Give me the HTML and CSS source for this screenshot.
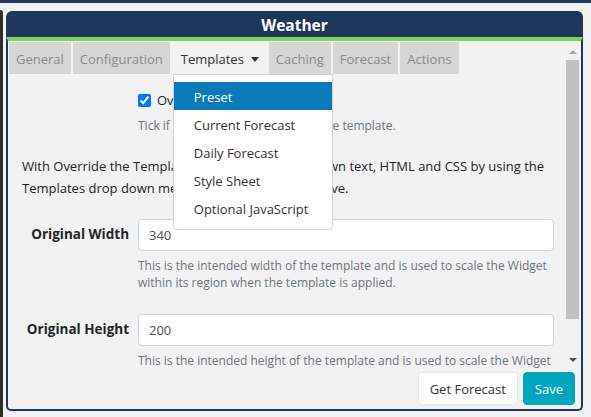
FILE: index.html
```html
<!DOCTYPE html>
<html>
<head>
<meta charset="utf-8">
<title>Weather</title>
<link rel="stylesheet" href="styles.css">
</head>
<body>
<div class="topbar"></div>
<div class="page">
  <div class="edge"></div>
  <div class="modal">
    <div class="modal-header">Weather</div>
    <div class="modal-body">
      <div class="scroll-area">
        <div class="scroll-content">
          <ul class="tabs">
            <li class="tab">General</li>
            <li class="tab">Configuration</li>
            <li class="tab active">Templates<span class="caret"></span>
              <div class="dropdown">
                <div class="dd-item selected">Preset</div>
                <div class="dd-item">Current Forecast</div>
                <div class="dd-item">Daily Forecast</div>
                <div class="dd-item">Style Sheet</div>
                <div class="dd-item">Optional JavaScript</div>
              </div>
            </li>
            <li class="tab">Caching</li>
            <li class="tab">Forecast</li>
            <li class="tab">Actions</li>
          </ul>
          <div class="pane">
            <div class="form-row check-row">
              <div></div>
              <label class="check"><input type="checkbox" checked> Override the template?</label>
            </div>
            <div class="form-row">
              <div></div>
              <div class="help tick-help">Tick if you would like to override the template.</div>
            </div>
            <p class="intro">With Override the Templates, you can enter your own text, HTML and CSS by using the<br>Templates drop down menu in the tab bar row above.</p>
            <div class="form-row group">
              <label class="label">Original Width</label>
              <div>
                <input class="input" type="text" value="340">
                <div class="help">This is the intended width of the template and is used to scale the Widget within its region when the template is applied.</div>
              </div>
            </div>
            <div class="form-row group">
              <label class="label">Original Height</label>
              <div>
                <input class="input" type="text" value="200">
                <div class="help">This is the intended height of the template and is used to scale the Widget within its region when the template is applied.</div>
              </div>
            </div>
          </div>
        </div>
        <div class="scrollbar">
          <div class="sb-btn"><span class="arrow-up"></span></div>
          <div class="sb-thumb"></div>
          <div class="sb-track"></div>
          <div class="sb-btn"><span class="arrow-down"></span></div>
        </div>
      </div>
      <div class="footer">
        <button class="btn btn-light">Get Forecast</button>
        <button class="btn btn-save">Save</button>
      </div>
    </div>
  </div>
</div>
</body>
</html>
```
FILE: styles.css
```css
* { box-sizing: border-box; }
html, body {
  margin: 0;
  padding: 0;
  background: #f2f2f2;
  font-family: "Open Sans", "Noto Sans", sans-serif;
  font-size: 13px;
  color: #212529;
  overflow: hidden;
  height: 417px;
}
.topbar {
  height: 3px;
  background: #223a5e;
}
.page {
  display: flex;
  gap: 3px;
  height: 414px;
}
.edge {
  width: 3px;
  margin-top: 7px;
  background: #2d2d2d;
  border-top-right-radius: 3px;
}
.modal {
  margin-top: 8px;
  width: 577px;
  height: 400px;
  display: flex;
  flex-direction: column;
}
.modal-header {
  height: 26px;
  background: #1f375b;
  border-radius: 6px 6px 0 0;
  color: #fff;
  font-weight: 700;
  font-size: 15.5px;
  line-height: 28px;
  text-align: center;
}
.modal-body {
  flex: 1;
  display: flex;
  flex-direction: column;
  border: 2px solid #1f375b;
  border-top: 4px solid #7dd35b;
  border-radius: 0 0 5px 5px;
  background: #f2f2f2;
  min-height: 0;
}
.scroll-area {
  height: 327px;
  display: flex;
  padding: 1px 1px 0 1px;
}
.scroll-content {
  flex: 1;
  overflow: hidden;
  position: relative;
}
.tabs {
  list-style: none;
  margin: 0;
  padding: 0;
  display: flex;
  gap: 2px;
  height: 32px;
}
.tab {
  position: relative;
  background: #d6d6d6;
  color: #8a8a8a;
  padding: 2px 7px 0 7px;
  line-height: 30px;
  white-space: nowrap;
}
.tab.active {
  background: #f2f2f2;
  color: #333;
  padding: 2px 8px 0 9px;
}
.caret {
  display: inline-block;
  vertical-align: middle;
  margin-left: 7px;
  margin-top: -3px;
  border-top: 5px solid #333;
  border-left: 4px solid transparent;
  border-right: 4px solid transparent;
}
.dropdown {
  position: absolute;
  top: 32px;
  left: 1px;
  width: 160px;
  background: #fff;
  border: 1px solid #d2d2d2;
  border-radius: 0 0 4px 4px;
  padding: 7px 0;
  z-index: 10;
}
.dd-item {
  height: 28px;
  line-height: 26px;
  padding: 2px 0 0 20px;
  color: #333;
}
.dd-item.selected {
  background: #0a7bb8;
  color: #fff;
}
.pane {
  padding: 16px 11px 0 13px;
}
.form-row {
  display: grid;
  grid-template-columns: 107px 1fr;
  column-gap: 9px;
}
.check-row {
  height: 20px;
  align-items: center;
}
.check {
  display: flex;
  align-items: center;
  gap: 6px;
  color: #212529;
}
.check input {
  margin: 0;
  width: 13px;
  height: 13px;
}
.help {
  font-size: 12px;
  line-height: 17px;
  color: #6c757d;
  margin-top: 6px;
}
.tick-help {
  margin-top: 7px;
}
.intro {
  margin: 21px 0 20px 0;
  line-height: 22px;
}
.group {
  margin-bottom: 23px;
}
.label {
  font-weight: 700;
  font-size: 13.5px;
  text-align: right;
  line-height: 30px;
  color: #212529;
  white-space: nowrap;
}
.input {
  display: block;
  width: 100%;
  height: 32px;
  border: 1px solid #ced4da;
  border-radius: 4px;
  background: #fff;
  padding: 0 10px;
  font-family: inherit;
  font-size: 13px;
  color: #495057;
}
.scrollbar {
  width: 15px;
  display: flex;
  flex-direction: column;
  background: #f1f1f1;
  padding-top: 1px;
}
.sb-btn {
  height: 17px;
  display: flex;
  align-items: center;
  justify-content: center;
}
.arrow-up {
  border-bottom: 4px solid #a3a3a3;
  border-left: 4px solid transparent;
  border-right: 4px solid transparent;
}
.arrow-down {
  border-top: 4px solid #505050;
  border-left: 4px solid transparent;
  border-right: 4px solid transparent;
}
.sb-thumb {
  height: 259px;
  margin: 0 1px;
  background: #c1c1c1;
}
.sb-track {
  flex: 1;
}
.footer {
  display: flex;
  justify-content: flex-end;
  gap: 5px;
  padding: 4px 6px 0 0;
}
.btn {
  height: 33px;
  border-radius: 4px;
  font-family: inherit;
  font-size: 13px;
  padding: 0 11px;
  cursor: pointer;
}
.btn-light {
  background: #fff;
  border: 1px solid #e6e6e6;
  color: #333;
}
.btn-save {
  background: #00a6bb;
  border: 1px solid #00a6bb;
  color: #fff;
}
```
